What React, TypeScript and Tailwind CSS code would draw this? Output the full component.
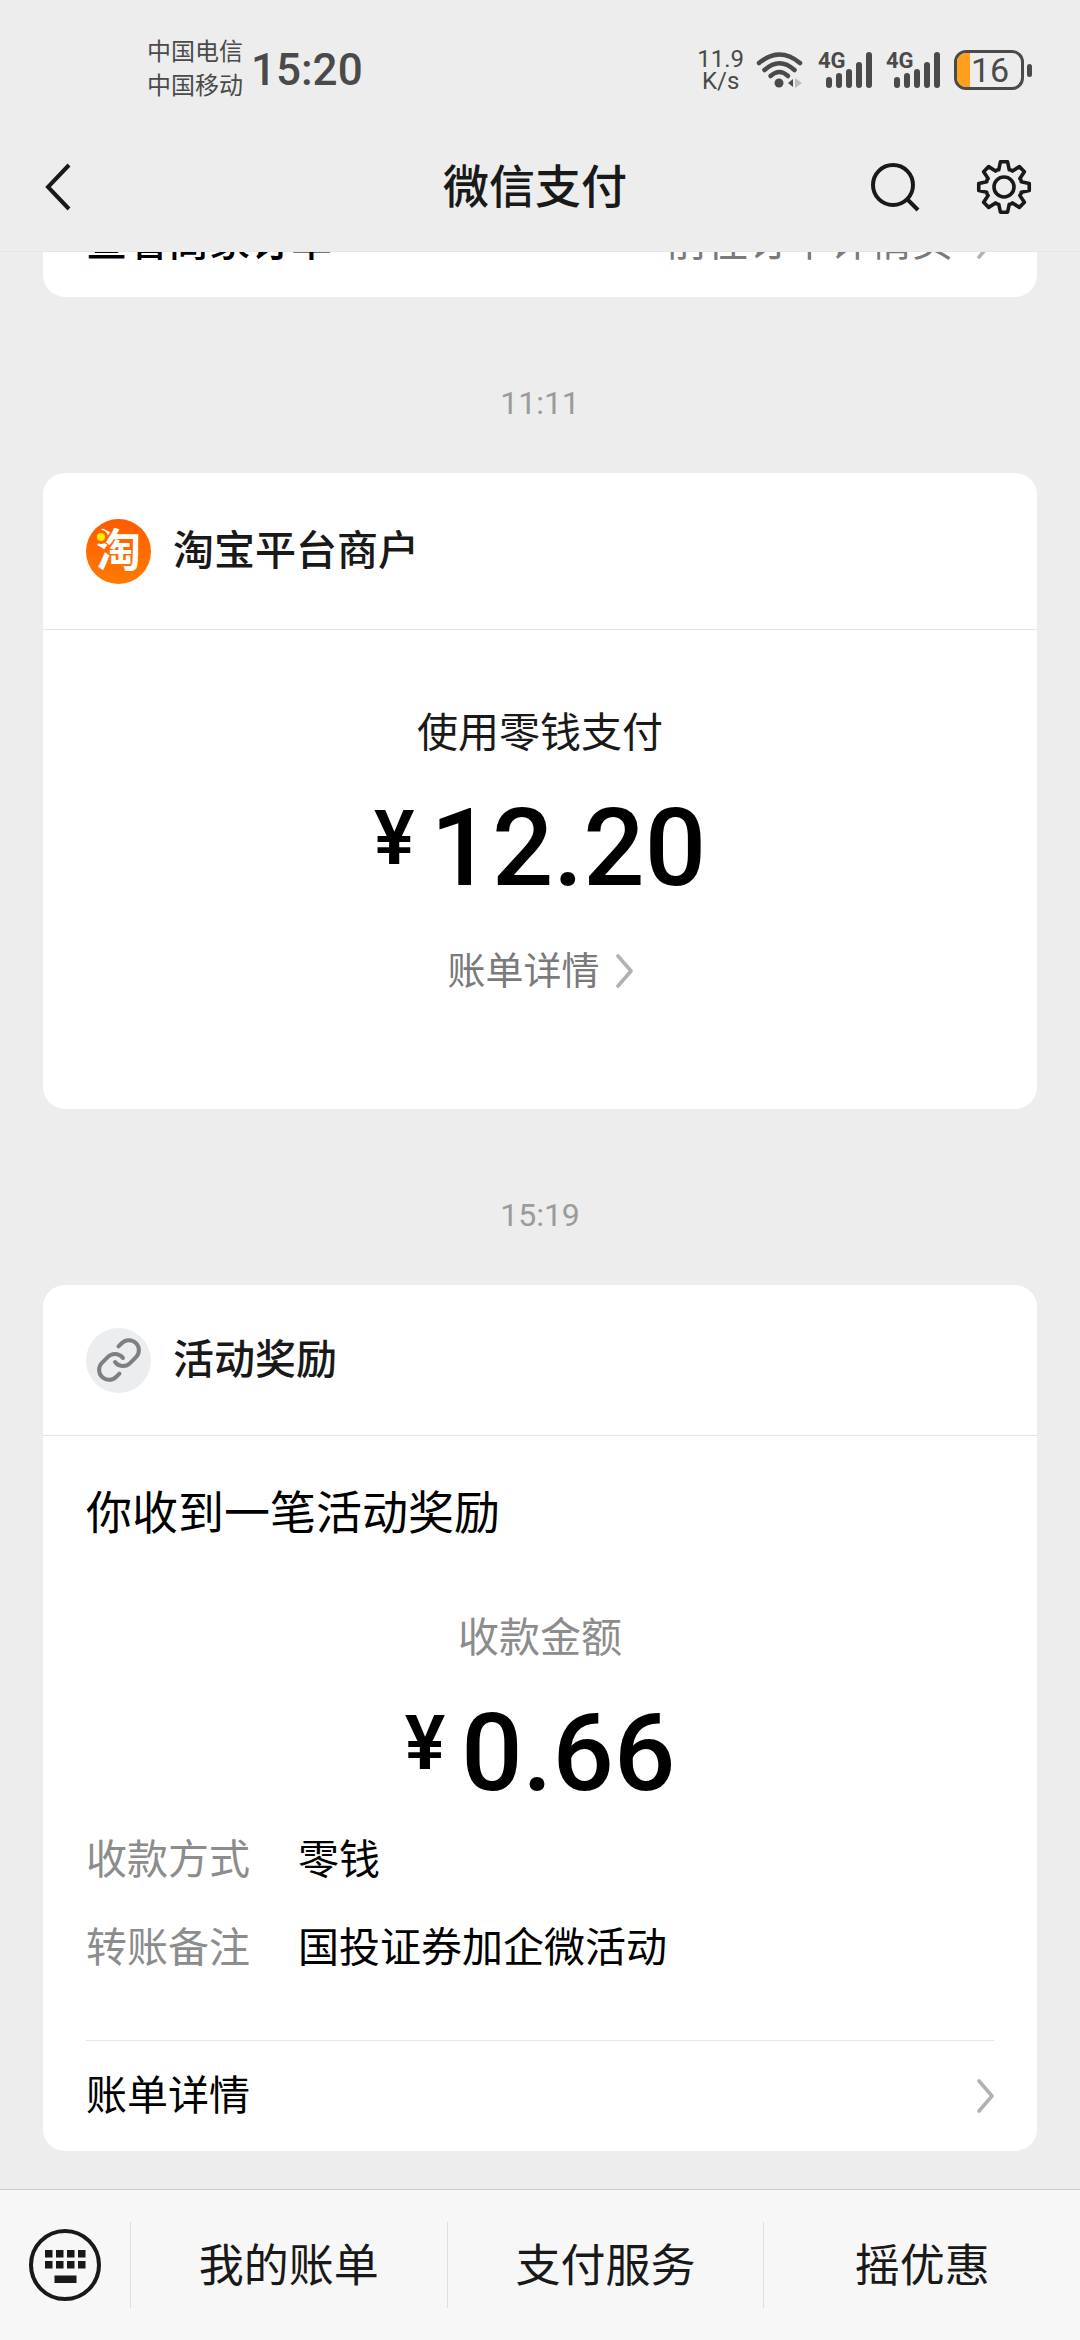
import { Link as LinkIcon } from "lucide-react";

const gearPoints = Array.from({ length: 8 }, (_, i) => {
  const point = (r: number, deg: number) => {
    const a = ((deg + i * 45 - 90) * Math.PI) / 180;
    return `${(28 + r * Math.cos(a)).toFixed(2)},${(28 + r * Math.sin(a)).toFixed(2)}`;
  };
  return [point(18, -17), point(25.5, -8), point(25.5, 8), point(18, 17), point(18.4, 22)].join(" ");
}).join(" ");

function Signal() {
  return (
    <div className="relative h-9 w-[54px]">
      <span className="absolute left-0 top-0 text-[22px] leading-[18px] font-bold">4G</span>
      <svg className="h-9 w-[54px]" viewBox="0 0 54 36" fill="currentColor">
        <rect x="8" y="25" width="6" height="11" rx="3" />
        <rect x="18" y="21" width="6" height="15" rx="3" />
        <rect x="28" y="17" width="6" height="19" rx="3" />
        <rect x="38" y="10" width="6" height="26" rx="3" />
        <rect x="48" y="0" width="6" height="36" rx="3" />
      </svg>
    </div>
  );
}

function StatusBar() {
  return (
    <div className="flex h-[116px] items-end justify-between pl-[147px] pr-12 pb-3 text-[#4a4a4a]">
      <div className="flex items-center gap-2">
        <div className="text-[24px] leading-[34px]">
          <p>中国电信</p>
          <p>中国移动</p>
        </div>
        <time className="pt-[2px] text-[44px] leading-[68px] font-medium">15:20</time>
      </div>
      <div className="flex h-[68px] items-center">
        <div className="mr-3 text-center text-[24px] leading-[22px]">
          <p>11.9</p>
          <p>K/s</p>
        </div>
        <svg className="mr-[14px] h-9 w-12" viewBox="0 0 48 36" fill="none" stroke="currentColor" strokeWidth="4.5" strokeLinecap="round">
          <path d="M3 11Q23.5 -6 44 11" />
          <path d="M8.5 18Q23.5 4.5 38.5 18" />
          <path d="M14.5 24Q23.5 16 32 24" />
          <circle cx="23" cy="31" r="4.5" fill="currentColor" stroke="none" />
          <path d="M32 31l5-4v8z" fill="currentColor" stroke="none" />
          <path d="M39 26l7 5-7 5z" fill="#bdbdbd" stroke="none" />
        </svg>
        <div className="mr-[14px] flex gap-[14px]">
          <Signal />
          <Signal />
        </div>
        <div className="flex items-center gap-[3px]">
          <div className="flex h-10 w-[70px] items-center overflow-hidden rounded-xl border-3 border-[#4a4a4a]">
            <div className="h-full w-[13px] bg-[#ff9f1c]" />
            <span className="pl-[1px] text-[34px] leading-[34px]">16</span>
          </div>
          <div className="h-[13px] w-[5px] rounded-full bg-[#4a4a4a]" />
        </div>
      </div>
    </div>
  );
}

function NavBar() {
  return (
    <div className="flex h-[136px] items-center border-b border-[#e6e6e6] pl-11 pr-12 pt-[6px] text-[#191919]">
      <button aria-label="返回" className="w-[156px]">
        <svg className="h-12 w-7" viewBox="0 0 28 48" fill="none" stroke="currentColor" strokeWidth="4">
          <path d="M25 2L4 24L25 46" />
        </svg>
      </button>
      <h1 className="flex-1 text-center text-[46px] leading-[60px] font-medium">微信支付</h1>
      <div className="flex w-[162px] items-center gap-[56px]">
        <button aria-label="搜索">
          <svg className="h-[50px] w-[50px]" viewBox="0 0 50 50" fill="none" stroke="currentColor" strokeWidth="4">
            <circle cx="23" cy="23" r="20" />
            <path d="M37 37L48 48" />
          </svg>
        </button>
        <button aria-label="设置">
          <svg className="h-14 w-14" viewBox="0 0 56 56" fill="none" stroke="currentColor" strokeWidth="3.6" strokeLinejoin="round">
            <polygon points={gearPoints} />
            <circle cx="28" cy="28" r="10" />
          </svg>
        </button>
      </div>
    </div>
  );
}

function Chevron() {
  return (
    <svg className="h-[34px] w-[17px]" viewBox="0 0 17 34" fill="none" stroke="#b2b2b2" strokeWidth="3.6" strokeLinecap="round" strokeLinejoin="round">
      <path d="M2 2L15 17L2 32" />
    </svg>
  );
}

function Time({ children }: { children: string }) {
  return (
    <time className="block pt-[86px] pb-[50px] text-center text-[32px] leading-[40px] text-[#9b9b9b]">
      {children}
    </time>
  );
}

function Amount({ value }: { value: string }) {
  return (
    <p className="flex items-start justify-center gap-4 leading-[110px] font-medium text-black">
      <span className="text-[76px] leading-[90px] font-semibold">¥</span>
      <span className="text-[108px]">{value}</span>
    </p>
  );
}

export default function App() {
  const details = [
    { label: "收款方式", value: "零钱" },
    { label: "转账备注", value: "国投证券加企微活动" },
  ];
  const menu = ["我的账单", "支付服务", "摇优惠"];

  return (
    <div className="flex h-screen flex-col bg-[#ededed] font-[Roboto,'Noto_Sans_CJK_SC',sans-serif] text-[41px] leading-[60px] text-[#191919]">
      <header className="shrink-0">
        <StatusBar />
        <NavBar />
      </header>

      {/* newest message stays at the bottom, older ones run under the header */}
      <main className="flex min-h-0 flex-1 flex-col justify-end overflow-hidden px-[43px] pb-[38px]">
        <section className="shrink-0 rounded-[22px] bg-white px-[43px]">
          <a href="#order" className="flex h-[110px] items-center">
            <span className="font-medium text-black">查看商家订单</span>
            <span className="ml-auto mr-6 text-[#7a7a7a]">前往订单详情页</span>
            <Chevron />
          </a>
        </section>

        <Time>11:11</Time>

        <section className="shrink-0 rounded-[22px] bg-white">
          <div className="flex h-[157px] items-center gap-[22px] border-b border-[#e5e5e5] px-[43px]">
            <div className="relative flex size-[65px] items-center justify-center rounded-full bg-linear-to-b from-[#ff5a00] to-[#ff7a00]">
              <span className="text-[45px] leading-[65px] font-bold text-white">淘</span>
              <span className="absolute left-[8px] top-[11px] size-[14px] rounded-full border-3 border-[#ff6000] bg-[#fff000]" />
            </div>
            <h2 className="font-medium">淘宝平台商户</h2>
          </div>
          <div className="pt-[73px] pb-[108px] text-center">
            <p className="mb-[30px]">使用零钱支付</p>
            <Amount value="12.20" />
            <a href="#bill" className="mt-[38px] flex items-center justify-center gap-4 text-[38px] text-[#7a7a7a]">
              账单详情
              <Chevron />
            </a>
          </div>
        </section>

        <Time>15:19</Time>

        <section className="shrink-0 rounded-[22px] bg-white">
          <div className="flex h-[151px] items-center gap-[22px] border-b border-[#e5e5e5] px-[43px]">
            <div className="flex size-[65px] items-center justify-center rounded-full bg-[#ebedef] text-[#7d7f82]">
              <LinkIcon size={48} strokeWidth={2} />
            </div>
            <h2 className="font-medium">活动奖励</h2>
          </div>
          <div className="px-[43px] pt-[47px]">
            <h3 className="text-[46px] text-black">你收到一笔活动奖励</h3>
            <p className="mt-[65px] mb-[30px] text-center text-[#8c8c8c]">收款金额</p>
            <Amount value="0.66" />
            <dl className="mt-[22px] mb-[62px] flex flex-col gap-7">
              {details.map((item) => (
                <div key={item.label} className="flex">
                  <dt className="w-[212px] text-[#8c8c8c]">{item.label}</dt>
                  <dd className="text-black">{item.value}</dd>
                </div>
              ))}
            </dl>
            <a href="#bill-detail" className="flex h-[111px] items-center justify-between border-t border-[#e5e5e5] text-black">
              账单详情
              <Chevron />
            </a>
          </div>
        </section>
      </main>

      <footer className="flex h-[151px] shrink-0 items-center border-t border-[#c9c9c9] bg-[#f7f7f7]">
        <button aria-label="键盘" className="flex w-[130px] justify-center">
          <svg className="size-[74px]" viewBox="0 0 74 74" fill="#191919">
            <circle cx="37" cy="37" r="34" fill="none" stroke="#191919" strokeWidth="4" />
            {[17, 28, 39, 50].map((x) => (
              <g key={x}>
                <rect x={x} y="22" width="7.5" height="7.5" />
                <rect x={x} y="33" width="7.5" height="7.5" />
              </g>
            ))}
            <rect x="26.5" y="47.5" width="22" height="7.5" />
          </svg>
        </button>
        {menu.map((label) => (
          <button key={label} className="h-[86px] flex-1 border-l border-[#dedede] pt-1 text-[45px]">
            {label}
          </button>
        ))}
      </footer>
    </div>
  );
}
